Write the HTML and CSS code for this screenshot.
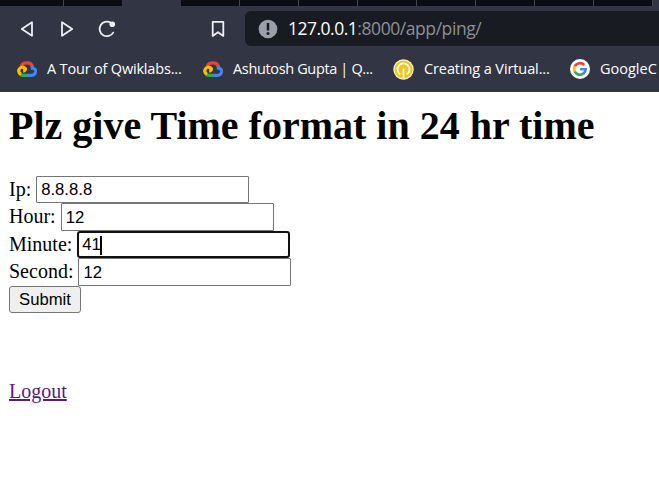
FILE: index.html
```html
<!DOCTYPE html>
<html lang="en">
<head>
<meta charset="utf-8">
<title>Ping</title>
<link rel="stylesheet" href="styles.css">
</head>
<body>
<svg width="0" height="0" class="defs" aria-hidden="true">
  <symbol id="cloud" viewBox="0 0 20 17">
    <path d="M4.2 5.2C5.2 2.2 7.3 1.8 10 1.8c2.8 0 5 1.6 5.5 4.2" fill="none" stroke="#ea4335" stroke-width="3.2"/>
    <path d="M14.8 4.8c.5 1 .6 1.6.6 2.4 2.7.3 3.3 2 3.1 3.7-.3 2.1-1.8 3.4-3.8 3.4H10" fill="none" stroke="#4285f4" stroke-width="3.2"/>
    <path d="M10.2 14.3H6c-1 0-2-.3-2.8-.9" fill="none" stroke="#34a853" stroke-width="3.2"/>
    <path d="M4 13.3C1.8 12 1.4 10 2.2 8.2 3.2 6 6.2 5.4 8.2 7.4c.8 1-.6 2.6-2 2.7" fill="none" stroke="#fbbc05" stroke-width="3.2"/>
  </symbol>
</svg>
<div class="browser">
  <div class="tabs"><i></i><i></i><i class="active"></i><i></i><i></i><i></i><i></i><i></i><i></i><i></i><i></i></div>
  <div class="toolbar">
    <svg class="back" width="16" height="18" viewBox="0 0 16 18"><path d="M12 2.2v13.6L1.8 9z"/></svg>
    <svg class="forward" width="16" height="18" viewBox="0 0 16 18"><path d="M2 2.2v13.6L12.2 9z"/></svg>
    <svg class="reload" width="20" height="18" viewBox="0 0 20 18"><path d="M15.2 12.6A7.3 7.3 0 1 1 12.6 2.6"/><circle cx="14.3" cy="4.3" r="2.8"/></svg>
    <svg class="save" width="14" height="18" viewBox="0 0 14 18"><path d="M1.7 1.8h10.6v14.1L7 12.2l-5.3 3.7z"/></svg>
    <div class="address">
      <svg width="20" height="20" viewBox="0 0 20 20"><circle cx="10" cy="10" r="9.3" fill="#9b9fa9"/><path d="M10 4v7.5" stroke="#181b21" stroke-width="2.5"/><circle cx="10" cy="14.6" r="1.5" fill="#181b21"/></svg>
      <span class="url"><b>127.0.0.1</b>:8000/app/ping/</span>
    </div>
  </div>
  <div class="bookmarks">
    <div class="mark m1"><svg width="20" height="17"><use href="#cloud"/></svg><span>A Tour of Qwiklabs...</span></div>
    <div class="mark m2"><svg width="20" height="17"><use href="#cloud"/></svg><span>Ashutosh Gupta | Q...</span></div>
    <div class="mark m3"><svg width="21" height="21" viewBox="0 0 21 21"><circle cx="10.5" cy="10.5" r="10.2" fill="#fbf3cf"/><circle cx="10.5" cy="10.5" r="9" fill="#f0c61b"/><path d="M7.4 15.6a6 6 0 1 1 6.2 0M10.5 9.5v10" fill="none" stroke="#fff" stroke-width="1.7"/></svg><span>Creating a Virtual...</span></div>
    <div class="mark m4"><svg width="20" height="20" viewBox="0 0 20 20"><circle cx="10" cy="10" r="10" fill="#fff"/><g fill="none" stroke-width="2.6"><path d="M14.2 6A5.8 5.8 0 0 0 4.8 7.4" stroke="#ea4335"/><path d="M4.9 7.2a5.8 5.8 0 0 0 0 5.6" stroke="#fbbc05"/><path d="M4.8 12.6a5.8 5.8 0 0 0 9 1.7" stroke="#34a853"/><path d="M13.5 14.5a5.8 5.8 0 0 0 2.2-4.2H10.2" stroke="#4285f4"/></g></svg><span>GoogleC</span></div>
  </div>
</div>
<main>
  <h1>Plz give Time format in 24 hr time</h1>
  <form>
    <div class="row"><label for="ip">Ip:</label><input id="ip" value="8.8.8.8"></div>
    <div class="row"><label for="hour">Hour:</label><input id="hour" value="12"></div>
    <div class="row"><label for="minute">Minute:</label><div class="field">41<i class="caret"></i></div></div>
    <div class="row"><label for="second">Second:</label><input id="second" value="12"></div>
    <button type="button">Submit</button>
  </form>
  <a href="#">Logout</a>
</main>
</body>
</html>
```
FILE: styles.css
```css
* { box-sizing: border-box; }
html { overflow: hidden; }
body { margin: 0; background: #fff; overflow: hidden; }
.defs { display: block; }
.browser { height: 92px; background: #323544; font-family: "Open Sans", sans-serif; overflow: hidden; }
.tabs { display: flex; height: 6px; }
.tabs i { flex: 0 0 59px; background: #0b0b14; border-right: 1px solid #45454a; }
.tabs i:first-child { flex-basis: 64px; }
.tabs i:nth-child(2) { flex-basis: 58px; border-right: 0; }
.tabs i.active { background: #323544; border-right: 0; }
.toolbar { display: flex; align-items: center; height: 45px; padding-left: 20px; }
.toolbar > svg { flex: none; fill: none; stroke: #eeeff2; stroke-width: 1.8; stroke-linejoin: round; stroke-linecap: round; }
.forward { margin-left: 24px; }
.reload { margin-left: 22px; }
.toolbar .reload circle { fill: #eeeff2; stroke: none; }
.save { margin-left: 93px; }
.address { display: flex; align-items: center; flex: 1; height: 35px; margin-left: 20px; padding-left: 13px; background: #181b21; border-radius: 6px 0 0 6px; }
.url { margin: 0 0 1px 10px; font-size: 17.5px; line-height: 24px; letter-spacing: -0.43px; color: #8d9096; white-space: nowrap; }
.url b { font-weight: 400; letter-spacing: -0.5px; color: #fff; }
.bookmarks { display: flex; height: 36px; padding-left: 17px; }
.mark { display: flex; align-items: center; flex: none; height: 36px; color: #fff; font-size: 14.5px; white-space: nowrap; }
.mark span { margin: 0 0 2px 10px; }
.m1 { width: 186px; letter-spacing: -0.18px; }
.m2 { width: 190px; letter-spacing: -0.35px; }
.m3 { width: 177px; letter-spacing: -0.1px; }
.m4 { letter-spacing: 0; }
main { padding: 11px 9px 0; font: 20px/23px "Liberation Serif", serif; color: #000; }
h1 { margin: 0 0 26.5px; font-size: 40px; line-height: 46px; white-space: nowrap; }
.row { display: flex; height: 27.5px; }
label { margin-right: 5px; line-height: 26px; }
input, .field { width: 213px; height: 27.5px; margin: 0; padding: 2px 4px 0; border: 1px solid #767676; border-radius: 1px; background: #fff; color: #000; font: 16.667px/24px "Liberation Sans", sans-serif; outline: none; }
.field { display: flex; align-items: center; padding-left: 3px; border: 2px solid #101010; border-radius: 3px; }
.caret { width: 2px; height: 19px; margin-left: -1px; background: #000; }
button { display: block; width: 72px; height: 27px; padding: 1px 0 0; border: 1px solid #767676; border-radius: 3px; background: #efefef; color: #000; font: 16.667px "Liberation Sans", sans-serif; }
a { display: block; width: fit-content; margin-top: 67.5px; color: #551a8b; text-decoration: underline; }
```
